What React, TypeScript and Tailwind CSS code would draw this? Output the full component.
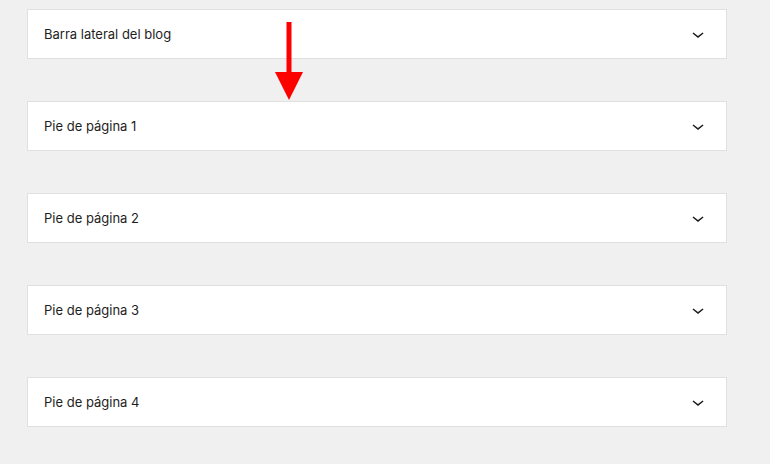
const panels = [
  "Barra lateral del blog",
  "Pie de página 1",
  "Pie de página 2",
  "Pie de página 3",
  "Pie de página 4",
];

const Chevron = () => (
  <svg width="24" height="24" viewBox="0 0 24 24" className="fill-[#1e1e1e]">
    <path d="M17.5 11.6L12 16l-5.5-4.4.9-1.2L12 14l4.6-3.6 1 1.2z" />
  </svg>
);

export default function App() {
  return (
    <div
      className="relative w-[770px] h-[464px] overflow-hidden bg-[#f0f0f0] pt-[9px] pl-[27px]"
      style={{ fontFamily: "Inter, 'Noto Sans', sans-serif" }}
    >
      <div className="flex flex-col gap-[42px]">
        {panels.map((title) => (
          <div
            key={title}
            className="w-[700px] h-[50px] bg-white border border-[#e0e0e0] flex items-center justify-between pl-4 pr-4"
          >
            <span className="text-[13px] text-[#1e1e1e] pt-[2px]">{title}</span>
            <Chevron />
          </div>
        ))}
      </div>

      {/* red annotation arrow */}
      <svg
        className="absolute left-[272px] top-[20px]"
        width="34"
        height="82"
        viewBox="0 0 34 82"
      >
        <line x1="17" y1="2" x2="17" y2="54" stroke="#ff0000" strokeWidth="5" />
        <polygon points="3,52 31,52 17,80" fill="#ff0000" />
      </svg>
    </div>
  );
}
